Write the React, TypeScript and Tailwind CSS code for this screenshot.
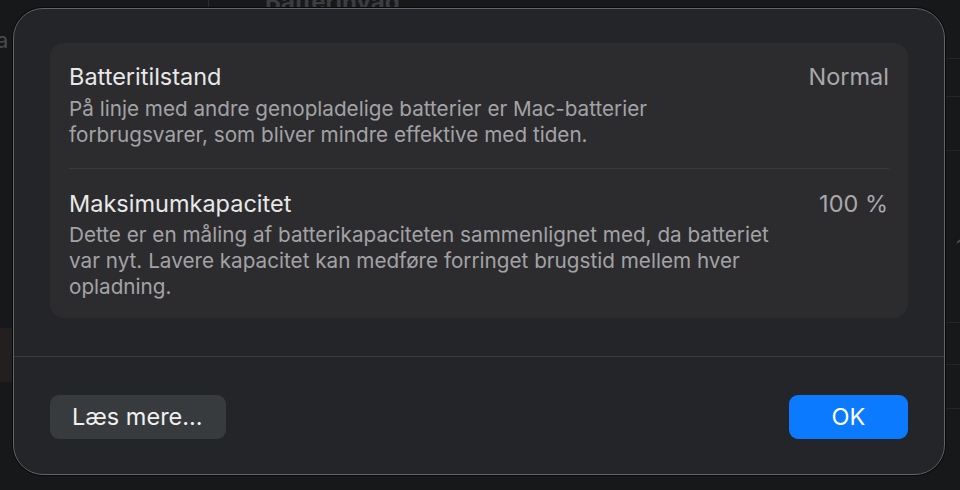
import React from "react";

export default function App() {
  return (
    <div
      className="relative w-[960px] h-[490px] overflow-hidden bg-[#17181a] pl-[13px] pt-[8px]"
      style={{ fontFamily: "Inter, 'Noto Sans', sans-serif" }}
    >
      {/* background content peeking out behind the dialog */}
      <div className="absolute left-[265px] top-[-16px] text-[24px] font-bold text-[#3c3d3f]">Batterihvad</div>
      <div className="absolute left-[208px] top-0 h-[8px] w-px bg-[#2a2b2d]" />
      <div className="absolute left-[-4px] top-[24px] text-[22px] text-[#4a4b4d]">a</div>
      <div className="absolute left-0 top-[328px] h-[54px] w-[14px] bg-[#221f1e]" />
      <div className="absolute right-[-5px] top-[231px] text-[22px] text-[#4a4b4d]">1</div>
      <div className="absolute right-0 top-[58px] h-px w-[16px] bg-[#242527]" />
      <div className="absolute right-0 top-[96px] h-px w-[16px] bg-[#242527]" />
      <div className="absolute right-0 top-[150px] h-px w-[16px] bg-[#242527]" />
      <div className="absolute right-0 top-[322px] h-px w-[16px] bg-[#242527]" />
      <div className="absolute right-0 top-[364px] h-px w-[16px] bg-[#242527]" />
      <div className="absolute right-0 top-[408px] h-px w-[16px] bg-[#242527]" />

      {/* dialog */}
      <div className="relative w-[932px] h-[467px] rounded-[30px] border border-[#626366] bg-[#232528] shadow-[0_0_0_1px_#0a0a0b] flex flex-col">
        <div className="px-[36px] pt-[34px]">
          <div className="rounded-[14px] bg-[#2c2c2f] px-[19px] pt-[22px] pb-[18px]">
            <div className="flex justify-between pb-[20px]">
              <div>
                <div className="text-[23.5px] leading-[24px] text-[#e8e8e8]">Batteritilstand</div>
                <div className="mt-[7px] text-[20.7px] leading-[26px] text-[#a3a3a5]">
                  På linje med andre genopladelige batterier er Mac-batterier
                  <br />
                  forbrugsvarer, som bliver mindre effektive med tiden.
                </div>
              </div>
              <div className="text-[23.5px] leading-[24px] text-[#a8a8aa]">Normal</div>
            </div>
            <div className="h-px bg-[#3b3b3e]" />
            <div className="flex justify-between pt-[23px]">
              <div>
                <div className="text-[23.5px] leading-[24px] text-[#e8e8e8]">Maksimumkapacitet</div>
                <div className="mt-[6px] text-[20.7px] leading-[26px] text-[#a3a3a5]">
                  Dette er en måling af batterikapaciteten sammenlignet med, da batteriet
                  <br />
                  var nyt. Lavere kapacitet kan medføre forringet brugstid mellem hver
                  <br />
                  opladning.
                </div>
              </div>
              <div className="text-[23.5px] leading-[24px] text-[#a8a8aa] pr-[1px]">100 %</div>
            </div>
          </div>
        </div>
        <div className="mt-[38px] h-px bg-[#3a3c3f]" />
        <div className="flex justify-between px-[36px] pt-[38px]">
          <button className="h-[44px] w-[176px] rounded-[9px] bg-[#383b3d] text-[23.5px] text-[#f0f0f0] text-left pl-[22px]">
            Læs mere...
          </button>
          <button className="h-[44px] w-[119px] rounded-[9px] bg-[#0b7aff] text-[23.5px] text-white">OK</button>
        </div>
      </div>
    </div>
  );
}
